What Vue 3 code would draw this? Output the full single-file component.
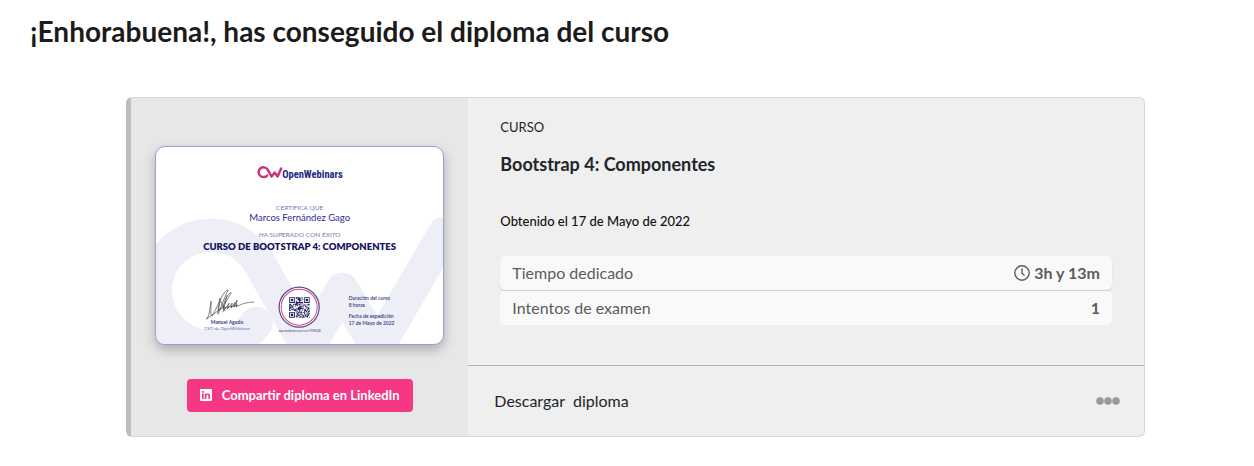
<script setup>
const stats = [
  { label: 'Tiempo dedicado', value: '3h y 13m', clock: true },
  { label: 'Intentos de examen', value: '1', clock: false },
]

const SIZE = 25
const inFinder = (x, y) => (x < 8 && y < 8) || (x > 16 && y < 8) || (x < 8 && y > 16)
const finderDot = (x, y) => {
  const fx = x > 16 ? x - 18 : x
  const fy = y > 16 ? y - 18 : y
  if (fx < 0 || fy < 0 || fx > 6 || fy > 6) return false
  const ring = Math.max(Math.abs(fx - 3), Math.abs(fy - 3))
  return ring !== 2
}
let seed = 77
const random = () => {
  seed = (seed * 1103515245 + 12345) % 2147483648
  return seed / 2147483648
}
let qrPath = ''
for (let y = 0; y < SIZE; y++) {
  for (let x = 0; x < SIZE; x++) {
    const on = inFinder(x, y) ? finderDot(x, y) : random() > 0.45
    if (on) qrPath += `M${x} ${y}h1v1h-1z`
  }
}
</script>

<template>
  <main class="page">
    <h1 class="heading">¡Enhorabuena!, has conseguido el diploma del curso</h1>

    <article class="card">
      <div class="preview">
        <svg class="diploma" viewBox="0 0 574 394" role="img" aria-label="Diploma">
          <g transform="scale(2)">
            <path
              class="watermark"
              d="M100 176A55.500 55.500 0 1 1 102 114L152 201L186 142L221 201L288 86"
            />
            <path
              class="brand-mark"
              d="M111 28.500A4.900 4.900 0 1 1 111.500 22.500L115.500 29.500L118.500 25.500L121.500 29.500L125 21.500"
            />
            <path
              class="signature"
              d="M51 172C54 166 54 159 55 154C55 162 54 168 56 169C60 162 63 156 64 151C64 158 61 166 62 167C64 162 69 149 72 143C68 142 62 157 62 162C63 166 71 153 75 146C75 143 69 151 68 156C67 163 67 163 69 162L73 156L71 162L76 156L75 161L79 155L78 160L81 153L80 160C84 157 90 155 98 155"
            />
            <path class="signature" d="M50 172L66 161L82 158M65 154L69 164M71 148L67 165" />
            <circle class="seal" cx="143" cy="160" r="20" />
            <circle class="seal-inner" cx="143" cy="160" r="18" />
            <path class="qr" transform="translate(133 150) scale(.82)" :d="qrPath" />
          </g>
          <text class="brand" x="252" y="62">OpenWebinars</text>
          <g class="centered">
            <text class="caption" x="287" y="125">CERTIFICA QUE</text>
            <text class="student" x="287" y="148">Marcos Fernández Gago</text>
            <text class="caption" x="287" y="179">HA SUPERADO CON ÉXITO</text>
            <text class="title" x="287" y="206">CURSO DE BOOTSTRAP 4: COMPONENTES</text>
            <text class="signer" x="142" y="354">Manuel Agudo</text>
            <text class="role" x="142" y="365">CEO de OpenWebinars</text>
            <text class="url" x="287" y="370">openwebinars.net/cert/9M4QB</text>
          </g>
          <g class="details">
            <text x="385" y="305">Duración del curso</text>
            <text x="385" y="319">8 horas</text>
            <text x="385" y="342">Fecha de expedición</text>
            <text x="385" y="356">17 de Mayo de 2022</text>
          </g>
        </svg>

        <button class="share" type="button">
          <svg class="linkedin" viewBox="0 0 12 12" aria-hidden="true">
            <path
              fill="#fff"
              fill-rule="evenodd"
              d="M1 0H11Q12 0 12 1V11Q12 12 11 12H1Q0 12 0 11V1Q0 0 1 0ZM2 4.600V10H3.700V4.600ZM2.850 1.900A.98 .98 0 1 0 2.860 1.900ZM4.700 4.600V10H6.400V7.200C6.400 5.500 8.400 5.500 8.400 7.200V10H10.100V6.700C10.100 4.200 7.400 3.900 6.400 5.400V4.600Z"
            />
          </svg>
          Compartir diploma en LinkedIn
        </button>
      </div>

      <div class="info">
        <div class="details-body">
          <p class="kind">CURSO</p>
          <h2 class="course">Bootstrap 4: Componentes</h2>
          <p class="date">Obtenido el 17 de Mayo de 2022</p>
          <dl class="stats">
            <div v-for="stat in stats" :key="stat.label" class="stat">
              <dt>{{ stat.label }}</dt>
              <dd>
                <svg v-if="stat.clock" class="clock" viewBox="0 0 16 16" aria-hidden="true">
                  <circle cx="8" cy="8" r="7.200" />
                  <path d="M8 3.500V8.300L10.500 10.500" />
                </svg>
                {{ stat.value }}
              </dd>
            </div>
          </dl>
        </div>
        <footer class="actions">
          <a class="download" href="#">Descargar&nbsp; diploma</a>
          <button class="more" type="button" aria-label="Más opciones">
            <svg viewBox="0 0 24 8" aria-hidden="true">
              <circle cx="4" cy="4" r="3.800" />
              <circle cx="12" cy="4" r="3.800" />
              <circle cx="20" cy="4" r="3.800" />
            </svg>
          </button>
        </footer>
      </div>
    </article>
  </main>
</template>

<style>
body {
  background: #fff;
}
</style>

<style scoped>
.page {
  padding: 12px 109px 29px 126px;
  font-family: Lato, "Open Sans", sans-serif;
  font-size: 16px;
  line-height: 24px;
  color: #212529;
}
.heading {
  margin: 0 0 47px -96px;
  font-size: 28px;
  line-height: 38px;
  font-weight: 700;
  color: #1b1b1b;
}
.card {
  display: flex;
  box-sizing: border-box;
  border: 1px solid #d8d8d8;
  border-left: 5px solid #bdbdbd;
  border-radius: 6px;
  background: #efefef;
  overflow: hidden;
}
.preview {
  flex: 0 0 33.3%;
  box-sizing: border-box;
  padding: 48px 24px 24px;
  display: flex;
  flex-direction: column;
  align-items: center;
  background: #e7e7e7;
}
.diploma {
  box-sizing: border-box;
  width: 100%;
  border: 1px solid #9a9fd6;
  border-radius: 10px;
  background: #fff;
  box-shadow: 0 5px 12px rgba(0, 0, 0, 0.25);
}
.watermark {
  fill: none;
  stroke: #eeeef7;
  stroke-width: 33;
  stroke-linecap: round;
  stroke-linejoin: round;
}
.brand-mark {
  fill: none;
  stroke: #c8357a;
  stroke-width: 2.500;
  stroke-linecap: round;
  stroke-linejoin: round;
}
.brand {
  font-family: "Roboto Condensed", "Liberation Sans Narrow", Lato, sans-serif;
  font-size: 21px;
  font-weight: 700;
  fill: #1d2a80;
}
.centered {
  text-anchor: middle;
}
.caption {
  font-size: 13px;
  fill: #7379b4;
}
.student {
  font-size: 19px;
  fill: #2d2d8c;
}
.title {
  font-size: 19px;
  font-weight: 800;
  fill: #14145f;
}
.signature {
  fill: none;
  stroke: #333;
  stroke-width: 0.6;
}
.signer {
  font-size: 10px;
  font-weight: 700;
  fill: #34408e;
}
.role {
  font-size: 9px;
  fill: #6a74ac;
}
.seal {
  fill: #fff;
  stroke: #4a4f96;
  stroke-width: 1.200;
}
.seal-inner {
  fill: #fff;
  stroke: #d9417f;
  stroke-width: 1;
}
.qr {
  fill: #23235f;
}
.url {
  font-size: 6px;
  fill: #3c3c70;
}
.details {
  font-size: 10px;
  font-weight: 600;
  fill: #34387c;
}
.share {
  margin-top: 34px;
  display: flex;
  align-items: center;
  gap: 10px;
  padding: 4px 13px 5px;
  border: 0;
  border-radius: 4px;
  background: #f53784;
  color: #fff;
  font: 700 13px/24px Lato, sans-serif;
  white-space: nowrap;
}
.linkedin {
  width: 12px;
  height: 12px;
}
.info {
  flex: 1;
  min-width: 0;
  display: flex;
  flex-direction: column;
}
.details-body {
  flex: 1;
  padding: 17px 32px 40px;
}
.kind {
  margin: 0 0 13px;
  font-size: 13px;
}
.course {
  margin: 0 0 33px;
  font-size: 18px;
  line-height: 24px;
  font-weight: 700;
}
.date {
  margin: 0 0 23px;
  font-size: 13px;
  font-weight: 500;
  color: #111;
}
.stats {
  margin: 0;
  display: grid;
  gap: 1px;
}
.stat {
  display: flex;
  justify-content: space-between;
  padding: 5px 12px;
  border-radius: 5px;
  background: #f9f9f9;
  color: #5c5c5c;
}
.stat:first-child {
  box-shadow: 0 1px 1px #ccc;
}
.stat dd {
  margin: 0;
  display: flex;
  align-items: center;
  gap: 4px;
  font-weight: 700;
}
.clock {
  width: 16px;
  height: 16px;
  fill: none;
  stroke: #5c5c5c;
  stroke-width: 1.400;
}
.actions {
  display: flex;
  align-items: center;
  justify-content: space-between;
  padding: 23px 24px 23px 26px;
  border-top: 1px solid #b0b0b0;
}
.download {
  color: #212529;
  text-decoration: none;
}
.more {
  padding: 0;
  border: 0;
  background: none;
  display: flex;
}
.more svg {
  width: 24px;
  height: 8px;
  fill: #999;
}
</style>
